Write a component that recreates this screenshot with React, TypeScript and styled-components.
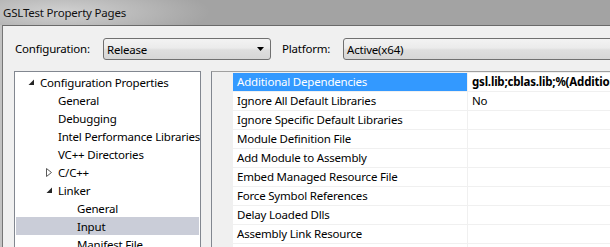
import React from "react";
import styled, { createGlobalStyle } from "styled-components";

const GlobalStyle = createGlobalStyle`
  html, body { margin: 0; padding: 0; }
  body {
    width: 610px;
    height: 247px;
    overflow: hidden;
    background: #f0f0f0;
    font-family: "Segoe UI", "Noto Sans", sans-serif;
    font-size: 11.5px;
    letter-spacing: -0.2px;
    color: #000;
  }
`;

const Window = styled.div`
  width: 610px;
  height: 247px;
  overflow: hidden;
  display: flex;
  flex-direction: column;
  background: #c2c2c2;
`;

const TitleBar = styled.div`
  height: 25px;
  flex: 0 0 25px;
  display: flex;
  align-items: center;
  padding-left: 3px;
  background:
    radial-gradient(ellipse 150px 30px at 60px 12px, rgba(214, 214, 214, 0.9), rgba(214, 214, 214, 0) 100%),
    #a3a3a3;
  color: #111;
  white-space: nowrap;
`;

const Client = styled.div`
  flex: 1;
  margin-left: 2px;
  border-top: 1px solid #6a6a6a;
  border-left: 1px solid #767676;
  background: #f0f0f0;
  display: flex;
  flex-direction: column;
  min-width: 0;
`;

const Toolbar = styled.div`
  height: 45px;
  flex: 0 0 45px;
  display: flex;
  align-items: flex-start;
  padding: 12px 0 0 12px;
  box-sizing: border-box;
`;

const Label = styled.div<{ $w: number; $ml?: number }>`
  width: ${(p) => p.$w}px;
  margin-left: ${(p) => p.$ml ?? 0}px;
  flex: 0 0 auto;
  height: 22px;
  line-height: 22px;
  white-space: nowrap;
`;

const Combo = styled.div<{ $w?: number }>`
  ${(p) => (p.$w ? `width: ${p.$w}px; flex: 0 0 auto;` : `flex: 1 0 auto; margin-right: -20px;`)}
  height: 22px;
  box-sizing: border-box;
  border: 1px solid #707070;
  border-radius: 3px;
  background: linear-gradient(#f3f3f3 0%, #ebebeb 45%, #dedede 55%, #d6d6d6 100%);
  display: flex;
  align-items: center;
  padding-left: 3px;
  position: relative;
  white-space: nowrap;
`;

const ComboArrow = styled.svg`
  position: absolute;
  right: 5px;
  top: 8px;
`;

const Main = styled.div`
  flex: 1;
  display: flex;
  align-items: flex-start;
  padding-left: 11px;
  min-height: 0;
`;

const Tree = styled.div`
  width: 187px;
  flex: 0 0 187px;
  height: 200px;
  box-sizing: border-box;
  border: 1px solid #828790;
  background: #fff;
  padding-top: 1px;
  overflow: hidden;
`;

const TreeRow = styled.div<{ $indent: number; $selected?: boolean }>`
  height: 18px;
  margin: 0 1px 0 0;
  display: flex;
  align-items: center;
  padding-left: ${(p) => p.$indent}px;
  background: ${(p) => (p.$selected ? "#cacdd8" : "transparent")};
  white-space: nowrap;
  ${(p) => (p.$selected ? "margin-left: 1px; padding-left: " + (p.$indent - 1) + "px;" : "")}
`;

const Expander = styled.span`
  width: 12px;
  flex: 0 0 12px;
  height: 18px;
  display: flex;
  align-items: center;
`;

const Grid = styled.div`
  flex: 1;
  margin-left: 10px;
  height: 200px;
  border-top: 1px solid #a0a0a0;
  border-left: 1px solid #828790;
  background: #fff;
  overflow: hidden;
  min-width: 0;
`;

const PropRow = styled.div`
  height: 19px;
  box-sizing: border-box;
  border-top: 1px solid #f0f0f0;
  display: flex;
`;

const Gutter = styled.div`
  width: 21px;
  flex: 0 0 21px;
  background: #f0f0f0;
`;

const NameCell = styled.div<{ $selected?: boolean }>`
  width: 235px;
  flex: 0 0 235px;
  box-sizing: border-box;
  padding-left: 4px;
  line-height: 18px;
  background: ${(p) => (p.$selected ? "#3399ff" : "#fff")};
  color: ${(p) => (p.$selected ? "#fff" : "#000")};
  border-right: 1px solid #f0f0f0;
  white-space: nowrap;
  overflow: hidden;
`;

const ValueCell = styled.div<{ $bold?: boolean }>`
  flex: 1 0 auto;
  padding-left: 4px;
  line-height: 18px;
  font-weight: ${(p) => (p.$bold ? 700 : 400)};
  white-space: nowrap;
`;

const FilledArrow = () => (
  <svg width="7" height="7" viewBox="0 0 7 7">
    <polygon points="6,0.5 6,6 0.5,6" fill="#262626" />
  </svg>
);

const OpenArrow = () => (
  <svg width="7" height="9" viewBox="0 0 7 9">
    <polygon points="0.5,0.5 5.5,4.5 0.5,8.5" fill="#fff" stroke="#595959" strokeWidth="1" />
  </svg>
);

type TreeItem = { text: string; level: number; exp?: "open" | "closed"; selected?: boolean };

const treeItems: TreeItem[] = [
  { text: "Configuration Properties", level: 0, exp: "open" },
  { text: "General", level: 1 },
  { text: "Debugging", level: 1 },
  { text: "Intel Performance Libraries", level: 1 },
  { text: "VC++ Directories", level: 1 },
  { text: "C/C++", level: 1, exp: "closed" },
  { text: "Linker", level: 1, exp: "open" },
  { text: "General", level: 2 },
  { text: "Input", level: 2, selected: true },
  { text: "Manifest File", level: 2 },
  { text: "Debugging", level: 2 },
];

const indents = [13, 31, 50];

type Prop = { name: string; value?: string; bold?: boolean; selected?: boolean };

const props: Prop[] = [
  { name: "Additional Dependencies", value: "gsl.lib;cblas.lib;%(AdditionalDependencies)", bold: true, selected: true },
  { name: "Ignore All Default Libraries", value: "No" },
  { name: "Ignore Specific Default Libraries" },
  { name: "Module Definition File" },
  { name: "Add Module to Assembly" },
  { name: "Embed Managed Resource File" },
  { name: "Force Symbol References" },
  { name: "Delay Loaded Dlls" },
  { name: "Assembly Link Resource" },
  { name: "" },
];

export default function App() {
  return (
    <>
      <GlobalStyle />
      <Window>
        <TitleBar>GSLTest Property Pages</TitleBar>
        <Client>
          <Toolbar>
            <Label $w={88}>Configuration:</Label>
            <Combo $w={168}>
              Release
              <ComboArrow width="8" height="5" viewBox="0 0 8 5">
                <polygon points="0,0 7,0 3.5,4" fill="#000" />
              </ComboArrow>
            </Combo>
            <Label $w={61} $ml={11}>Platform:</Label>
            <Combo>Active(x64)</Combo>
          </Toolbar>
          <Main>
            <Tree>
              {treeItems.map((t, i) => (
                <TreeRow key={i} $indent={indents[t.level]} $selected={t.selected}>
                  <Expander>
                    {t.exp === "open" ? <FilledArrow /> : t.exp === "closed" ? <OpenArrow /> : null}
                  </Expander>
                  {t.text}
                </TreeRow>
              ))}
            </Tree>
            <Grid>
              {props.map((p, i) => (
                <PropRow key={i}>
                  <Gutter />
                  <NameCell $selected={p.selected}>{p.name}</NameCell>
                  <ValueCell $bold={p.bold}>{p.value}</ValueCell>
                </PropRow>
              ))}
            </Grid>
          </Main>
        </Client>
      </Window>
    </>
  );
}
